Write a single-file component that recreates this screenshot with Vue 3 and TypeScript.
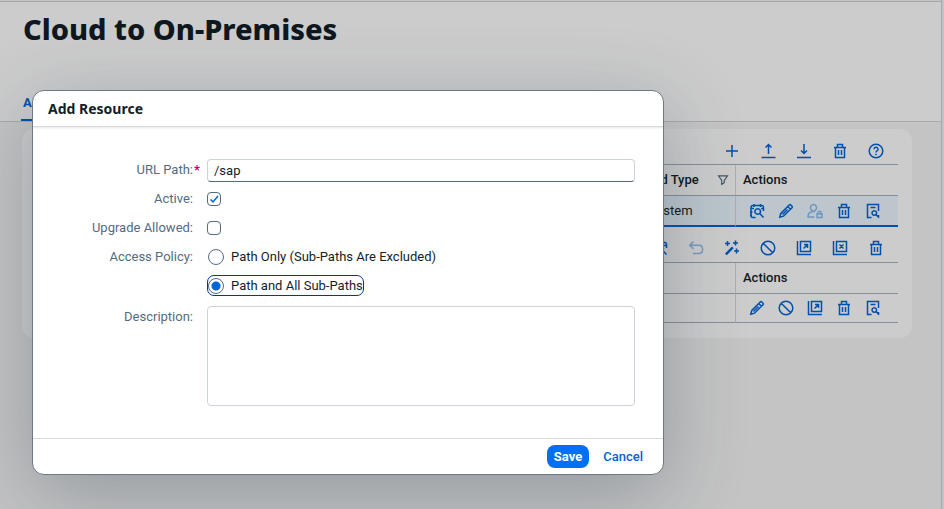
<script setup lang="ts">
import { ref } from 'vue'

type IconName =
  | 'add' | 'upload' | 'download' | 'delete' | 'help' | 'filter' | 'check' | 'edit' | 'user'
  | 'detail' | 'undo' | 'wand' | 'block' | 'open' | 'close'

const icons: Record<IconName, string> = {
  add: 'M8 2v12M2 8h12',
  upload: 'M8.500 11V1.500M5.500 4.500L8.500 1.500 11.500 4.500M1.500 14.500h14',
  download: 'M8 1v9.500M5 7.500L8 10.500 11 7.500M1 14.500h14',
  delete: 'M2 4.500h12M5.500 4.500v-3h5v3M3.500 4.500v10h9v-10M6.500 7v5M9.500 7v5',
  help: 'M8 1.200a6.800 6.800 0 1 0 0 13.600a6.800 6.800 0 1 0 0-13.600M6 6.200a2 2 0 1 1 3 1.700q-1 .5-1 1.600M8 10.800v1.400',
  filter: 'M2 2.500h12L9.700 8.500v3.200L6.300 14V8.500z',
  check: 'M6.500 14.500H4q-2 0-2-2v-8q0-2 2-2h8.500q2 0 2 2V8M5 1v3M11.500 1v3M2 5.500h3M12 5.500h2M8.700 5.700a2.800 2.800 0 1 0 .01 0M10.700 10.500L14.500 14.500M1 9h2.500M1 12h2',
  edit: 'M1.800 14.200l1-3.700L11.200 2q.8-.7 1.600 0l1.200 1.200q.7.8 0 1.600L5.500 13.200zM9.700 3.500l2.800 2.800M4.500 11.500l5-5',
  user: 'M6.500 1.500a3 3.300 0 1 0 .01 0M7.500 14H1q0-5.500 5.500-5.500 .8 0 1.500.3M10 11h5v3.500h-5zM11 11v-1.500q0-1.300 1.500-1.300t1.500 1.300v1.500',
  detail: 'M6.500 14.500h-4v-13h11v6.500M13.500 12v3M5.500 4.500h5M9.300 7.700a2.300 2.300 0 1 0 .01 0M11 11.500L14 14.800',
  undo: 'M5.500 1.500L1.800 5.200 5.500 9M1.800 5.200H11q3.500 0 3.500 3.500v1.300q0 3.500-3.500 3.500H5',
  wand: 'M1.500 14L8.500 7M2.200 14.700l7-7M3.500 1v5M1 3.500h5M11.500 .5v5M9 3h5M12.500 8.500v5M10 11h5',
  block: 'M8 1.200a6.800 6.800 0 1 0 0 13.600a6.800 6.800 0 1 0 0-13.600M3.200 3.200l9.600 9.600',
  open: 'M1.500 1v13.500H15M4.500 1.500h10v10h-10zM7.500 8.500L11.500 4.500M8 4.500h3.500V8',
  close: 'M1.500 1v13.500H15M4.500 1.500h10v10h-10zM7.500 4.500l4 4M11.500 4.500l-4 4',
}

interface Action { icon: IconName; label: string; disabled?: boolean }

const mappingTools: Action[] = [
  { icon: 'add', label: 'Add' },
  { icon: 'upload', label: 'Upload' },
  { icon: 'download', label: 'Download' },
  { icon: 'delete', label: 'Delete all' },
  { icon: 'help', label: 'Help' },
]
const mappingActions: Action[] = [
  { icon: 'check', label: 'Check' },
  { icon: 'edit', label: 'Edit' },
  { icon: 'user', label: 'Principal', disabled: true },
  { icon: 'delete', label: 'Delete' },
  { icon: 'detail', label: 'Details' },
]
const resourceTools: Action[] = [
  { icon: 'check', label: 'Check' },
  { icon: 'undo', label: 'Undo', disabled: true },
  { icon: 'wand', label: 'Activate' },
  { icon: 'block', label: 'Deactivate' },
  { icon: 'open', label: 'Allow' },
  { icon: 'close', label: 'Disallow' },
  { icon: 'delete', label: 'Delete' },
]
const resourceActions: Action[] = [
  { icon: 'edit', label: 'Edit' },
  { icon: 'block', label: 'Deactivate' },
  { icon: 'open', label: 'Allow' },
  { icon: 'delete', label: 'Delete' },
  { icon: 'detail', label: 'Details' },
]

const urlPath = ref('/sap')
const active = ref(true)
const upgradeAllowed = ref(false)
const policy = ref('all')
const description = ref('')
</script>

<template>
  <div class="page">
    <div class="shell">
      <header class="header">
        <h1 class="title">Cloud to On-Premises</h1>
        <nav class="tabs"><a class="tab" href="#access">Ac</a></nav>
      </header>
      <main class="card">
        <div class="toolbar">
          <button v-for="a in mappingTools" :key="a.label" class="tool" type="button" :aria-label="a.label">
            <svg class="icon" viewBox="0 0 16 16"><path :d="icons[a.icon]" /></svg>
          </button>
        </div>
        <table class="table">
          <colgroup><col><col class="type-col"><col class="actions-col"></colgroup>
          <thead>
            <tr>
              <th></th>
              <th class="divided">
                <div class="head">
                  <span>Back-end Type</span>
                  <svg class="icon filter" viewBox="0 0 16 16"><path :d="icons.filter" /></svg>
                </div>
              </th>
              <th>Actions</th>
            </tr>
          </thead>
          <tbody>
            <tr class="selected">
              <td></td>
              <td class="divided">ABAP System</td>
              <td>
                <div class="actions">
                  <button v-for="a in mappingActions" :key="a.label" class="action" type="button" :aria-label="a.label" :disabled="a.disabled">
                    <svg class="icon" viewBox="0 0 16 16"><path :d="icons[a.icon]" /></svg>
                  </button>
                </div>
              </td>
            </tr>
          </tbody>
        </table>
        <div class="toolbar second">
          <button v-for="a in resourceTools" :key="a.label" class="tool" type="button" :aria-label="a.label" :disabled="a.disabled">
            <svg class="icon" viewBox="0 0 16 16"><path :d="icons[a.icon]" /></svg>
          </button>
        </div>
        <table class="table">
          <colgroup><col><col class="actions-col"></colgroup>
          <thead>
            <tr><th class="divided"></th><th>Actions</th></tr>
          </thead>
          <tbody>
            <tr>
              <td class="divided"></td>
              <td>
                <div class="actions">
                  <button v-for="a in resourceActions" :key="a.label" class="action" type="button" :aria-label="a.label">
                    <svg class="icon" viewBox="0 0 16 16"><path :d="icons[a.icon]" /></svg>
                  </button>
                </div>
              </td>
            </tr>
          </tbody>
        </table>
      </main>
    </div>

    <div class="overlay">
      <form class="dialog" role="dialog" aria-labelledby="dialog-title" @submit.prevent>
        <h2 id="dialog-title" class="dialog-title">Add Resource</h2>
        <div class="form">
          <label class="label" for="url">URL Path:<span class="required">*</span></label>
          <input id="url" v-model="urlPath" class="text" type="text" required>
          <label class="label" for="active">Active:</label>
          <span class="cell">
            <input id="active" v-model="active" class="checkbox" type="checkbox">
            <svg v-if="active" class="tick" viewBox="0 0 14 14"><path d="M3.500 7.500L6 10l5-6" /></svg>
          </span>
          <label class="label" for="upgrade">Upgrade Allowed:</label>
          <span class="cell"><input id="upgrade" v-model="upgradeAllowed" class="checkbox" type="checkbox"></span>
          <span id="policy" class="label">Access Policy:</span>
          <div class="radios" role="radiogroup" aria-labelledby="policy">
            <label class="radio" :class="{ focused: policy === 'only' }">
              <input v-model="policy" class="dot" type="radio" name="policy" value="only">
              <span>Path Only (Sub-Paths Are Excluded)</span>
            </label>
            <label class="radio" :class="{ focused: policy === 'all' }">
              <input v-model="policy" class="dot" type="radio" name="policy" value="all">
              <span>Path and All Sub-Paths</span>
            </label>
          </div>
          <label class="label area-label" for="description">Description:</label>
          <textarea id="description" v-model="description" class="area"></textarea>
        </div>
        <footer class="footer">
          <button class="button primary" type="submit">Save</button>
          <button class="button" type="button">Cancel</button>
        </footer>
      </form>
    </div>
  </div>
</template>

<style>
body {
  background: #f5f6f7;
}
</style>

<style scoped>
.page {
  position: relative;
  min-height: 100vh;
  box-sizing: border-box;
  padding-right: 2px;
  overflow: hidden;
  background: #f0f6f9;
  color: #131e29;
  font: 13px/20px Roboto, "Liberation Sans", sans-serif;
}
.shell {
  min-height: 100vh;
  box-sizing: border-box;
  padding-top: 1px;
  border-right: 1px solid #ccd3d8;
  background: #f5f5f6;
}
.header {
  padding: 9px 21px 0;
  border-top: 1px solid #d0d0d0;
  border-bottom: 1px solid #d3d4d6;
  background: #fff;
}
.title {
  margin: 0;
  padding-left: 2px;
  font: 800 29px/36px "Noto Sans", sans-serif;
}
.tabs {
  display: flex;
  margin-top: 46px;
}
.tab {
  padding: 0 2px 6px;
  border-bottom: 2px solid #0064d9;
  color: #0064d9;
  font-weight: 700;
  text-decoration: none;
}
.card {
  margin: 7px 29px 0 22px;
  padding: 8px 14px 15px;
  border-radius: 12px;
  background: #fff;
}
.toolbar {
  display: flex;
  justify-content: flex-end;
  padding-right: 4px;
}
.second {
  padding-top: 7px;
  padding-bottom: 1px;
}
.tool,
.action {
  display: flex;
  align-items: center;
  justify-content: center;
  height: 27px;
  padding: 0;
  border: 0;
  background: none;
  color: #0064d9;
}
.tool {
  width: 36px;
}
.action {
  width: 29px;
}
.tool:disabled,
.action:disabled {
  opacity: 0.4;
}
.icon {
  width: 16px;
  height: 16px;
  fill: none;
  stroke: currentColor;
  stroke-width: 1.5;
}
.table {
  width: 100%;
  table-layout: fixed;
  border-top: 1px solid #a8b2bd;
  border-spacing: 0;
}
.type-col {
  width: 130px;
}
.actions-col {
  width: 162px;
}
th,
td {
  padding: 0 6px 0 7px;
  border-bottom: 1px solid #a8b2bd;
  text-align: left;
}
th {
  height: 30px;
  font-weight: 500;
}
td {
  height: 28px;
}
.divided {
  border-right: 1px solid #d9d9d9;
}
.head {
  display: flex;
  align-items: center;
  justify-content: space-between;
}
.filter {
  width: 12px;
  height: 12px;
  color: #556b82;
}
.selected td {
  height: 29px;
  border-bottom: 2px solid #0064d9;
  background: #ebf8ff;
}
.actions {
  display: flex;
  margin-left: -1px;
}
.overlay {
  position: absolute;
  inset: 0;
  padding: 90px 32px 0;
  background: rgba(0, 0, 0, 0.2);
}
.dialog {
  width: 67%;
  min-width: 632px;
  box-sizing: border-box;
  overflow: hidden;
  border: 1px solid #6c7884;
  border-radius: 12px;
  background: #fff;
  box-shadow: 0 20px 80px rgba(34, 53, 72, 0.3);
}
.dialog-title {
  margin: 0;
  padding: 0 15px;
  border-bottom: 1px solid #d9d9d9;
  box-shadow: 0 1px 2px rgba(34, 53, 72, 0.12);
  font: 700 14px/35px "Noto Sans", sans-serif;
}
.form {
  display: grid;
  grid-template-columns: 160px 1fr;
  grid-template-rows: 29px 29px 29px 58px auto;
  column-gap: 14px;
  padding: 29px 28px 32px 0;
}
.label {
  position: relative;
  padding-top: 4px;
  color: #556b82;
  text-align: right;
}
.area-label {
  padding-top: 6px;
}
.required {
  position: absolute;
  left: 100%;
  padding-left: 1px;
  color: #ba066c;
  font-weight: 700;
}
.text,
.area {
  box-sizing: border-box;
  width: 100%;
  margin: 0;
  border: 1px solid #ccd3da;
  border-radius: 4px;
  outline: 0;
  background: #fff;
  color: inherit;
  font: inherit;
}
.text {
  height: 23px;
  margin-top: 3px;
  padding: 0 6px;
  border-bottom-color: #556b81;
}
.area {
  height: 100px;
  margin-top: 5px;
  padding: 4px 6px;
  resize: none;
}
.cell {
  display: flex;
  position: relative;
  align-items: center;
  height: 28px;
}
.checkbox,
.dot {
  flex: none;
  box-sizing: border-box;
  margin: 0;
  border: 1px solid #556b82;
  appearance: none;
  background: #fff;
}
.checkbox {
  width: 14px;
  height: 14px;
  border-radius: 4px;
}
.tick {
  position: absolute;
  left: 0;
  width: 14px;
  height: 14px;
  fill: none;
  stroke: #0064d9;
  stroke-width: 1.5;
  pointer-events: none;
}
.radios {
  display: flex;
  flex-direction: column;
  align-items: flex-start;
  gap: 8px;
  padding-top: 3px;
}
.radio {
  display: flex;
  align-items: center;
  gap: 7px;
  height: 21px;
  box-sizing: border-box;
  border: 1px solid transparent;
  border-radius: 7px;
  line-height: 18px;
}
.focused {
  border-color: #0032a5;
}
.dot {
  width: 16px;
  height: 16px;
  border-radius: 50%;
}
.dot:checked {
  background: radial-gradient(circle, #0064d9 0 4px, #fff 5px);
}
.footer {
  display: flex;
  justify-content: flex-end;
  gap: 7px;
  padding: 6px 13px 6px 0;
  border-top: 1px solid #d9d9d9;
}
.button {
  height: 23px;
  padding: 0 7px;
  border: 0;
  border-radius: 8px;
  background: none;
  color: #0064d9;
  font: inherit;
  font-weight: 500;
}
.primary {
  background: #0070f2;
  color: #fff;
  font-weight: 700;
}
</style>
